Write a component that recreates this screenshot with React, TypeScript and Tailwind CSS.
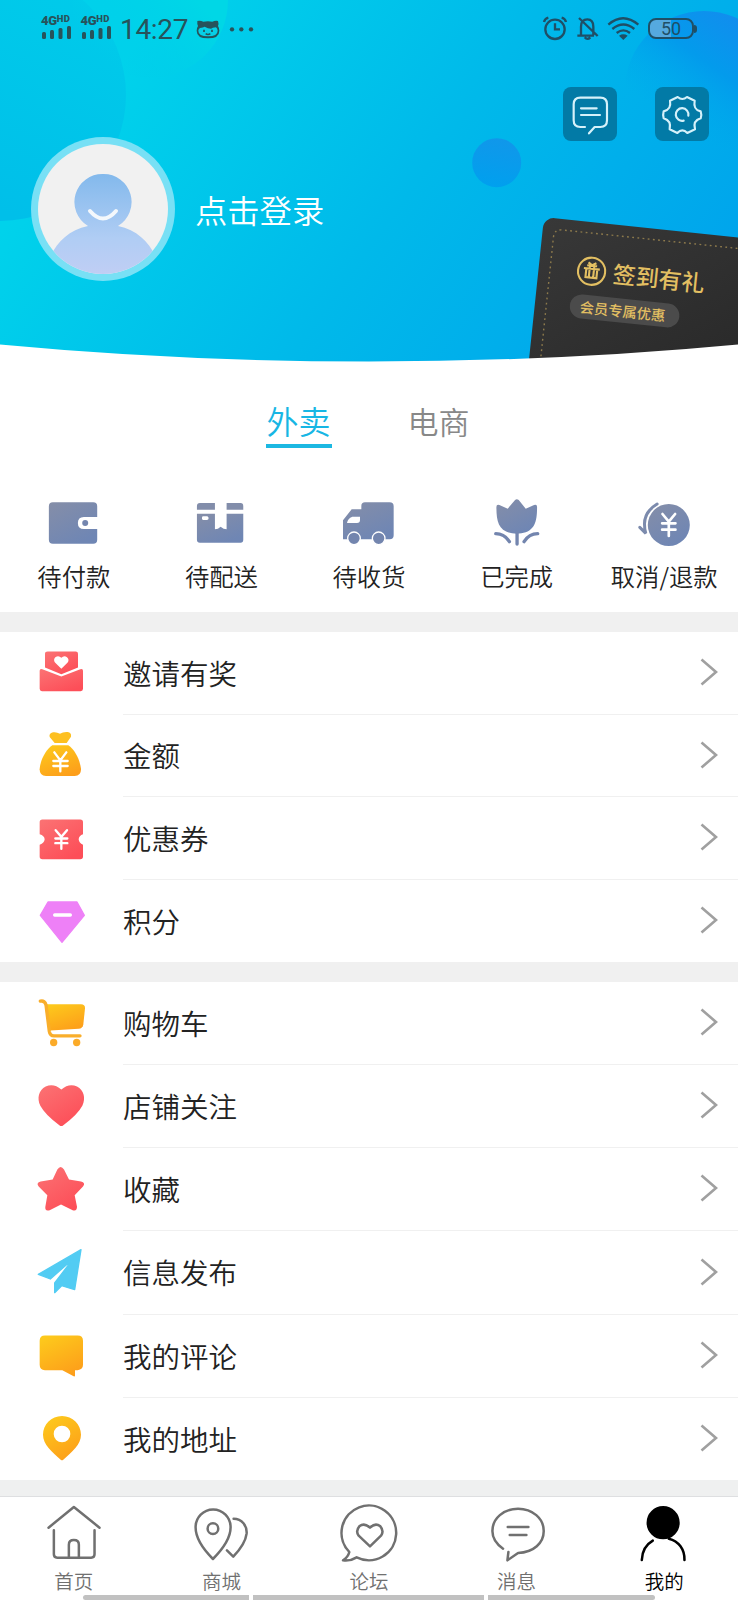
import type { ReactNode } from 'react'

const orders = [
  { label: '待付款', viewBox: '131.4 42 180 180', icon: <WalletIcon /> },
  { label: '待配送', viewBox: '574.2 42 180 180', icon: <BoxIcon /> },
  { label: '待收货', viewBox: '1017 42 180 180', icon: <TruckIcon /> },
  { label: '已完成', viewBox: '355.8 42 180 180', icon: <TulipIcon /> },
  { label: '取消/退款', viewBox: '798.6 42 180 180', icon: <RefundIcon /> },
]

const walletRows = [
  { label: '邀请有奖', height: 'h-[83px]', viewBox: '90 40.5 180 180', icon: <InviteIcon /> },
  { label: '金额', height: 'h-[82px]', viewBox: '90 288 180 180', icon: <MoneyBagIcon /> },
  { label: '优惠券', height: 'h-[83px]', viewBox: '90 535.5 180 180', icon: <CouponIcon /> },
  { label: '积分', height: 'h-[82px]', viewBox: '90 783 180 180', icon: <GemIcon /> },
]

const serviceRows = [
  { label: '购物车', height: 'h-[83px]', viewBox: '90 70.5 180 180', icon: <CartIcon /> },
  { label: '店铺关注', height: 'h-[83px]', viewBox: '90 319.5 180 180', icon: <HeartIcon /> },
  { label: '收藏', height: 'h-[83px]', viewBox: '90 568.5 180 180', icon: <StarIcon /> },
  { label: '信息发布', height: 'h-[84px]', viewBox: '90 69 180 180', icon: <PlaneIcon /> },
  { label: '我的评论', height: 'h-[83px]', viewBox: '90 319.5 180 180', icon: <CommentIcon /> },
  { label: '我的地址', height: 'h-[82px]', viewBox: '90 567 180 180', icon: <PinIcon /> },
]

const tabs = [
  { label: '首页', viewBox: '131.4 96 180 180', icon: <HomeIcon /> },
  { label: '商城', viewBox: '574.2 96 180 180', icon: <MallIcon /> },
  { label: '论坛', viewBox: '1017 96 180 180', icon: <ForumIcon /> },
  { label: '消息', viewBox: '355.8 96 180 180', icon: <MessageIcon /> },
  { label: '我的', viewBox: '798.6 96 180 180', icon: <MeIcon />, active: true },
]

export default function App() {
  return (
    <div className="relative h-[1600px] w-[738px] overflow-hidden bg-white font-['Noto_Sans_CJK_SC',sans-serif] font-[350] text-[#222]">
      <Gradients />
      <Header />

      <div className="flex h-[121px] justify-center gap-[75px] pt-[38px] pr-[2px] text-[32px] leading-[39px]">
        <div className="h-[47px] w-[66px] border-b-[4px] border-[#1cb8e2] text-center text-[#17b6e4]">外卖</div>
        <div className="w-[64px] text-center text-[31px] text-[#888]">电商</div>
      </div>

      <div className="grid h-[128px] grid-cols-5 pt-[10px]">
        {orders.map((item) => (
          <div key={item.label} className="flex flex-col items-center">
            <svg className="size-[60px]" viewBox={item.viewBox}>{item.icon}</svg>
            <span className="mt-[4px] text-[24.3px] leading-[36px] whitespace-nowrap">{item.label}</span>
          </div>
        ))}
      </div>

      <div className="h-[20px] bg-[#f0f0f0]" />
      <List rows={walletRows} />
      <div className="h-[20px] bg-[#f0f0f0]" />
      <List rows={serviceRows} />
      <div className="h-[17px] border-b border-[#dedfe1] bg-[#eff0f0]" />

      <nav className="grid h-[103px] grid-cols-5 pt-[5px]">
        {tabs.map((tab) => (
          <div key={tab.label} className={`flex flex-col items-center ${tab.active ? 'text-black' : 'text-[#707070]'}`}>
            <svg
              className="size-[60px]"
              viewBox={tab.viewBox}
              fill="none"
              stroke="currentColor"
              strokeWidth="7.5"
              strokeLinecap="round"
              strokeLinejoin="round"
            >
              {tab.icon}
            </svg>
            <span className="mt-[4px] text-[19.5px] leading-[30px]">{tab.label}</span>
          </div>
        ))}
      </nav>

      <div className="absolute bottom-0 left-[83px] flex h-[5px] gap-[4px]">
        <div className="w-[166px] rounded-l-full bg-[#c1c1c1]" />
        <div className="w-[231px] bg-[#c1c1c1]" />
        <div className="w-[167px] rounded-r-full bg-[#c1c1c1]" />
      </div>
    </div>
  )
}

function Header() {
  return (
    <header className="relative h-[363px] overflow-hidden">
      <svg className="absolute inset-0" width="738" height="363" viewBox="0 0 738 363">
        <rect width="738" height="363" fill="url(#sky)" />
        <circle cx="0" cy="95" r="126" fill="url(#discLeft)" />
        <circle cx="150" cy="0" r="78" fill="url(#discTop)" />
        <circle cx="704" cy="90" r="79" fill="url(#discRight)" />
        <circle cx="496.7" cy="162.7" r="24.5" fill="url(#discSmall)" />
      </svg>

      <div className="relative flex h-[57px] items-start pl-[41px] text-[#27535b]">
        <Signal />
        <Signal />
        <span className="mt-[14px] font-[Roboto] text-[28px] leading-[32px] font-normal tracking-[-0.3px]">14:27</span>
        <svg className="mt-[18px] ml-[8px]" width="60" height="24" viewBox="588 54 180 72">
          <path
            d="M592 63q9-2 18 2 14-3 27 0 9-4 17-2 3 9 0 15 4 6 4 14 0 23-34 23t-34-23q0-8 4-14-3-6-2-15z"
            fill="currentColor"
          />
          <path d="M600 84q10-1 14-4 10 6 19 6 4-3 15-4 5 4 5 10 0 17-29 17t-29-17q0-5 5-8z" fill="#07cfe6" />
          <path d="M612 89v7M636 89v7M617 101q7 5 14 0" stroke="currentColor" strokeWidth="5" fill="none" />
          <circle cx="696" cy="88" r="6.5" fill="currentColor" />
          <circle cx="724" cy="88" r="6.5" fill="currentColor" />
          <circle cx="753" cy="88" r="6.5" fill="currentColor" />
        </svg>
        <StatusIcons />
      </div>

      <div className="relative mt-[30px] flex justify-end gap-[38px] pr-[29px]">
        <HeaderButton viewBox="584 261 162 162">
          <path d="M650 381h-14q-20 0-20-20v-48q0-20 20-20h60q20 0 20 20v48q0 20-20 20h-17l-17 19" />
          <path d="M638 325h47M638 345h57" />
        </HeaderButton>
        <HeaderButton viewBox="862 261 162 162">
          <path d="M930 291q14 12 28 0l23 11c-3 17 0 28 18 32q4 11 0 21c-17 5-22 15-17 33l-23 11q-15-16-30 0l-23-11c4-18-1-28-18-33q-3-11 0-21c18-5 22-15 19-32z" />
          <path d="M962 347a19 19 0 1 0-14 15" />
        </HeaderButton>
      </div>

      <div className="relative -mt-[4px] flex items-center pl-[30.5px]">
        <svg width="144" height="144" viewBox="0 0 144 144">
          <defs>
            <clipPath id="face">
              <circle cx="72" cy="72" r="65" />
            </clipPath>
          </defs>
          <circle cx="72" cy="72" r="72" fill="#78e0f5" />
          <circle cx="72" cy="72" r="65" fill="#f1f1f1" />
          <g clipPath="url(#face)" fill="url(#person)">
            <path d="M72 37a28 28 0 0 1 15 52c28 6 40 28 45 55H12c5-27 17-49 45-55a28 28 0 0 1 15-52z" />
          </g>
          <path d="M59 74q13 15 26 0" fill="none" stroke="#f4f8fc" strokeWidth="4" strokeLinecap="round" />
        </svg>
        <span className="ml-[20.5px] text-[32.3px] leading-[44px] text-white">点击登录</span>
      </div>

      <div className="absolute top-[216.5px] left-[544px] h-[170px] w-[240px] origin-top-left rotate-6 rounded-[11px] bg-linear-to-br from-[#383838] to-[#262626] pt-[33px] pl-[37.5px] text-[#e2bf62]">
        <svg className="absolute inset-0" width="240" height="170" viewBox="0 0 240 170">
          <path
            d="M11.5 170V19q0-8 8-8H240"
            fill="none"
            stroke="#8d7a4c"
            strokeWidth="1.4"
            strokeDasharray="1.8 3.4"
          />
        </svg>
        <div className="relative flex h-[31px] items-center gap-[7px]">
          <svg width="30" height="30" viewBox="0 0 30 30" fill="none" stroke="currentColor" strokeWidth="2.1">
            <circle cx="15" cy="15" r="13.6" />
            <path d="M7 12.5h16M9.5 12.5v9h11v-9M12.8 9v12.5M17.2 9v12.5M10 9.5h10M15 9l-4-2.5M15 9l4-2.5" />
          </svg>
          <span className="text-[23px] leading-[31px] font-medium whitespace-nowrap">签到有礼</span>
        </div>
        <div className="relative -ml-[3px] mt-[9px] h-[24px] w-[110px] rounded-full bg-[#4b4b4b] pr-[3px] text-center text-[14.3px] leading-[23px] font-medium whitespace-nowrap">
          会员专属优惠
        </div>
      </div>

      <svg className="absolute bottom-0 left-0" width="738" height="19" viewBox="0 0 738 19">
        <path d="M0 0.5Q180 17.5 369 17.5T738 0.5V19H0z" fill="#fff" />
      </svg>
    </header>
  )
}

function Signal() {
  return (
    <div className="mt-[14px] w-[39.5px] font-[Roboto] font-black">
      <div className="flex h-[12px] items-start">
        <span className="text-[13px] leading-[13px] tracking-[-0.3px]">4G</span>
        <span className="text-[9.5px] leading-[9px] tracking-[0.3px]">HD</span>
      </div>
      <svg width="31" height="13" viewBox="0 0 31 13" fill="currentColor">
        <rect x="1" y="6" width="4" height="7" rx="1.5" />
        <rect x="9" y="4" width="4" height="9" rx="1.5" />
        <rect x="17.5" y="2" width="4" height="11" rx="1.5" />
        <rect x="26" y="0" width="4" height="13" rx="1.5" />
      </svg>
    </div>
  )
}

function StatusIcons() {
  return (
    <div className="mr-[41px] ml-auto flex pt-[14px] text-[#1f4f66]">
      <svg width="98" height="28" viewBox="520 42 294 84" fill="none" stroke="currentColor" strokeWidth="7">
        <circle cx="559" cy="88" r="29" />
        <path d="M559 70v18h15M526 66q2-10 13-13M592 66q-2-10-13-13" />
        <path d="M637 106V80q0-22 19-22 18 0 18 22v26M626 107h50M648 112q8 9 17 0M631 54l56 54" />
        <path d="M719 74q44-38 90 0M731 87q33-27 66 0M744 99q20-16 40 0" />
        <path d="M751 107q13-8 26 0l-13 13z" fill="currentColor" stroke="none" />
      </svg>
      <div className="mt-[4px] ml-[8.5px] flex h-[21px] items-center">
        <div className="flex h-[21px] w-[46px] items-center justify-center rounded-[8px] border-2 border-current bg-linear-to-r from-[#55a9df] from-50% to-transparent to-50% font-[Roboto] text-[18px] font-normal">
          50
        </div>
        <div className="h-[8px] w-[3px] rounded-r bg-current" />
      </div>
    </div>
  )
}

function HeaderButton({ viewBox, children }: { viewBox: string; children: ReactNode }) {
  return (
    <button className="size-[54px] rounded-[8px] bg-[#027aa6]">
      <svg
        className="size-full"
        viewBox={viewBox}
        fill="none"
        stroke="#d5f1fa"
        strokeWidth="6.5"
        strokeLinecap="round"
        strokeLinejoin="round"
      >
        {children}
      </svg>
    </button>
  )
}

function List({ rows }: { rows: { label: string; height: string; viewBox: string; icon: ReactNode }[] }) {
  return (
    <ul>
      {rows.map((row, i) => (
        <li key={row.label} className={`flex items-center pl-[30px] ${row.height}`}>
          <svg className="size-[60px]" viewBox={row.viewBox}>{row.icon}</svg>
          <div
            className={`ml-[33px] flex h-full flex-1 items-center justify-between pr-[20px] ${i < rows.length - 1 ? 'border-b border-[#f0f0f0]' : ''}`}
          >
            <span className="-mt-px text-[28.5px] leading-[40px]">{row.label}</span>
            <svg className="-mt-[2px]" width="18" height="28" viewBox="0 0 18 28" fill="none" stroke="#a0a0a0" strokeWidth="2.6">
              <path d="M1.5 1.5L16 14L1.5 26.5" />
            </svg>
          </div>
        </li>
      ))}
    </ul>
  )
}

function Gradients() {
  return (
    <svg className="absolute" width="0" height="0">
      <defs>
        <linearGradient id="sky" gradientUnits="userSpaceOnUse" x1="110" y1="80" x2="610" y2="440">
          <stop offset="0" stopColor="#00d2eb" />
          <stop offset="0.5" stopColor="#00b9ea" />
          <stop offset="1" stopColor="#00a4ec" />
        </linearGradient>
        <linearGradient id="discLeft" x1="1" y1="0" x2="0.6" y2="1">
          <stop offset="0" stopColor="#00cdea" />
          <stop offset="1" stopColor="#00bfe9" />
        </linearGradient>
        <linearGradient id="discTop" x1="0.8" y1="0.5" x2="0.3" y2="1">
          <stop offset="0" stopColor="#00d7e6" />
          <stop offset="1" stopColor="#00cbea" stopOpacity="0" />
        </linearGradient>
        <linearGradient id="discRight" x1="0.8" y1="0" x2="0.3" y2="0.7">
          <stop offset="0" stopColor="#158aee" />
          <stop offset="0.5" stopColor="#039bec" />
          <stop offset="1" stopColor="#00aaec" stopOpacity="0" />
        </linearGradient>
        <linearGradient id="discSmall" x1="0.6" y1="0" x2="0.4" y2="1">
          <stop offset="0" stopColor="#1197ea" />
          <stop offset="1" stopColor="#00a0ee" />
        </linearGradient>
        <linearGradient id="person" x1="0" y1="0" x2="0" y2="1">
          <stop offset="0" stopColor="#83b9ec" />
          <stop offset="0.6" stopColor="#b0cdf4" />
          <stop offset="1" stopColor="#c3cef4" />
        </linearGradient>
        <linearGradient id="slate" x1="0" y1="0" x2="0.6" y2="1">
          <stop offset="0" stopColor="#858ea8" />
          <stop offset="1" stopColor="#6f86b4" />
        </linearGradient>
        <linearGradient id="red" x1="0" y1="0" x2="0.7" y2="1">
          <stop offset="0" stopColor="#fb7374" />
          <stop offset="1" stopColor="#fd4e58" />
        </linearGradient>
        <linearGradient id="amber" x1="0.2" y1="0" x2="0.7" y2="1">
          <stop offset="0" stopColor="#fdc91c" />
          <stop offset="1" stopColor="#fd9e1a" />
        </linearGradient>
      </defs>
    </svg>
  )
}

function WalletIcon() {
  return (
    <>
      <path
        d="M158 67h121q12 0 12 12v32h-40q-18 0-18 18t18 18h40v32q0 12-12 12H158q-12 0-12-12V79q0-12 12-12z"
        fill="url(#slate)"
      />
      <circle cx="255" cy="129" r="9" fill="#7385ae" />
    </>
  )
}

function BoxIcon() {
  return (
    <>
      <path d="M601 69h45v20h-54V79q0-10 9-10zM681 69h42q8 0 8 10v10h-50z" fill="#828daa" />
      <path
        d="M592 101h54v47l9-2 8-6 9 6 9 2v-47h50v78q0 9-8 9H601q-9 0-9-9zM610 109q-3 0-3 6t5 5h10q5 0 5-5t-4-6z"
        fill="url(#slate)"
      />
    </>
  )
}

function TruckIcon() {
  return (
    <>
      <path
        d="M1084 88V78q0-11 11-11h74q12 0 12 12v87q0 12-12 12h-140v-57l26-33zM1057 110q-14 5-16 19h30q9 0 9-9v-10z"
        fill="url(#slate)"
      />
      <circle cx="1062" cy="175" r="19" fill="#7385ae" stroke="#fff" strokeWidth="4" />
      <circle cx="1136" cy="175" r="19" fill="#7385ae" stroke="#fff" strokeWidth="4" />
    </>
  )
}

function TulipIcon() {
  return (
    <>
      <path
        d="M440 60q5-5 11 0l21 26 25-11q9-3 9 6c0 45-7 72-47 79q-14 2-28 0c-40-7-47-34-47-79q0-9 9-6l25 11z"
        fill="url(#slate)"
      />
      <path d="M446 160v32M382 161q26 0 41 24M508 161q-26 0-41 24" fill="none" stroke="#7385ae" strokeWidth="10" strokeLinecap="round" />
    </>
  )
}

function RefundIcon() {
  return (
    <>
      <circle cx="903" cy="135" r="63" fill="url(#slate)" />
      <path d="M868 72q-38 23-38 60 0 15 4 28l-18-18" fill="none" stroke="#7c8bad" strokeWidth="9" strokeLinecap="round" />
      <path d="M884 102l19 23 19-23M903 125v43M883 130h40M883 149h40" fill="none" stroke="#fff" strokeWidth="8" strokeLinecap="round" />
    </>
  )
}

function InviteIcon() {
  return (
    <>
      <path d="M143 63h84q7 0 7 7v41l-50 20-49-20V70q0-7 8-7z" fill="url(#red)" />
      <path d="M119 121q0-8 8-5l57 22 57-22q8-3 8 5v54q0 7-7 7H126q-7 0-7-7z" fill="url(#red)" />
      <path d="M184 115l-19-19q-6-9 1-16 10-7 18 2 8-9 17-2 8 7 2 16z" fill="#fff" />
    </>
  )
}

function MoneyBagIcon() {
  return (
    <>
      <path d="M164 339h36l13-19q2-12-10-14-14-1-23 5-11-6-21-4-13 3-10 14z" fill="#fdc021" />
      <path d="M157 346h48c20 14 34 42 38 70q1 22-19 22h-86q-20 0-19-22c3-28 18-56 38-70z" fill="url(#amber)" />
      <path d="M163 367l18 24 18-24M181 391v33M160 393h43M160 408h43" fill="none" stroke="#fff" strokeWidth="7" strokeLinecap="round" />
    </>
  )
}

function CouponIcon() {
  return (
    <>
      <path
        d="M127 567h114q8 0 8 8v36q-12 4-13 15 1 11 13 17v35q0 8-8 8H127q-8 0-8-8v-35q14-6 15-17-1-11-15-15v-36q0-8 8-8z"
        fill="url(#red)"
      />
      <path d="M167 599l17 20 17-20M184 619v36M166 624h36M166 638h36" fill="none" stroke="#fff" strokeWidth="7" strokeLinecap="round" />
    </>
  )
}

function GemIcon() {
  return (
    <>
      <path d="M144 816h87l22 40-67 81-65-81z" fill="#ee80f7" stroke="#ee80f7" strokeWidth="4" strokeLinejoin="round" />
      <path d="M164 855h47" stroke="#fff" strokeWidth="10" strokeLinecap="round" />
    </>
  )
}

function CartIcon() {
  return (
    <>
      <path d="M134 101h109q13 0 12 13l-5 47q-2 13-14 14l-84 5q-6 0-7-6z" fill="url(#amber)" />
      <path d="M121 92q14-3 17 11l10 80q2 13 14 13h78" fill="none" stroke="#f9ae2b" strokeWidth="10" strokeLinecap="round" />
      <circle cx="161" cy="216" r="11" fill="#fbab29" />
      <circle cx="230" cy="216" r="11" fill="#fbab29" />
    </>
  )
}

function HeartIcon() {
  return <path d="M184 357q23-20 47-9c21 11 27 35 16 58q-15 28-57 58-6 5-12 0-42-30-57-58c-11-23-5-47 16-58q24-11 47 9z" fill="url(#red)" />
}

function StarIcon() {
  return (
    <path
      d="M172 597q10-15 20 0l15 30 36 6q15 4 6 15l-25 26 7 35q0 14-13 10l-35-17-34 17q-15 4-13-10l6-35-26-26q-9-11 6-15l36-6z"
      fill="url(#red)"
    />
  )
}

function PlaneIcon() {
  return (
    <g fill="#52ccf3" stroke="#52ccf3" strokeWidth="4" strokeLinejoin="round">
      <path d="M243 89L115 163l36 14 68-60-55 72v29l21-21 39 12z" />
    </g>
  )
}

function CommentIcon() {
  return (
    <path
      d="M135 345h98q16 0 16 16v72q0 15-16 16h-8v17q-1 3-4 1l-34-18h-52q-16 0-16-16v-72q0-16 16-16z"
      fill="url(#amber)"
    />
  )
}

function PinIcon() {
  return (
    <>
      <path d="M186 588c32 0 57 25 57 56 0 30-27 51-54 76q-3 2-6 0c-27-25-54-46-54-76 0-31 25-56 57-56z" fill="url(#amber)" />
      <circle cx="186" cy="642" r="25" fill="#fff" />
    </>
  )
}

function HomeIcon() {
  return (
    <>
      <path d="M145 173l76-62 77 62" />
      <path d="M161 181v72q0 10 10 10h102q10 0 10-10v-72M206 261v-37q0-14 15-14t15 14v37" />
    </>
  )
}

function MallIcon() {
  return (
    <>
      <path d="M640 267c-30-30-52-62-52-95a52 53 0 0 1 105 0c0 33-23 65-53 95z" />
      <circle cx="640" cy="176" r="16" />
      <path d="M702 146c25 0 41 22 39 45-3 26-20 48-40 69l-19-19" />
    </>
  )
}

function ForumIcon() {
  return (
    <>
      <path d="M1048 246a82 82 0 1 1 22 16q-19 12-41 9 15-9 19-25z" />
      <path d="M1110 229l-34-32q-10-14 2-28 15-12 32 4 16-16 31-4 12 14 2 28z" />
    </>
  )
}

function MessageIcon() {
  return (
    <>
      <path d="M404 236c-16-11-32-29-32-53 0-38 34-67 77-67s77 29 77 67c0 36-30 64-77 66l-32 22 3-25" />
      <path d="M418 171h62M424 195h50" />
    </>
  )
}

function MeIcon() {
  return (
    <>
      <circle cx="886" cy="158" r="46" fill="currentColor" />
      <path d="M822 270c1-25 12-46 33-58M903 206c30 7 48 33 47 64" />
    </>
  )
}
